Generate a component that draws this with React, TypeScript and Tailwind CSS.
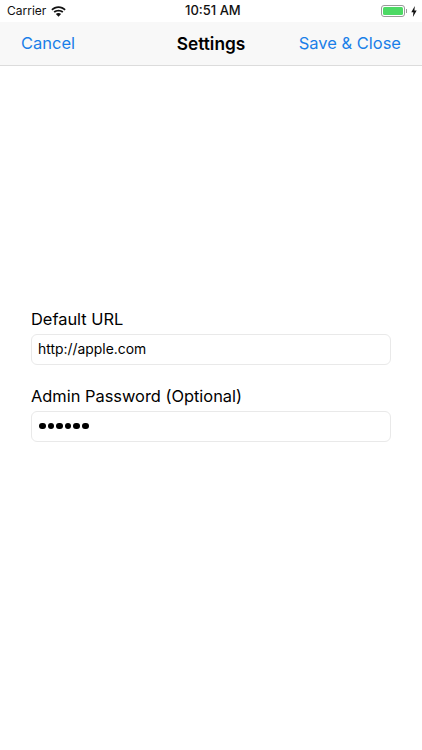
// App.tsx
const font = { fontFamily: "Inter, 'Liberation Sans', sans-serif" };

function Wifi() {
  return (
    <svg width="15" height="11" viewBox="0 0 15 11" fill="#111">
      <path d="M7.5 0.3C4.7 0.3 2.2 1.4 0.3 3.2L1.5 4.4C3.1 2.9 5.2 2 7.5 2s4.4 0.9 6 2.4l1.2-1.2C12.8 1.4 10.3 0.3 7.5 0.3z" />
      <path d="M7.5 3.7C5.6 3.7 3.9 4.4 2.6 5.6L3.8 6.8C4.8 5.9 6.1 5.4 7.5 5.4s2.7 0.5 3.7 1.4l1.2-1.2C11.1 4.4 9.4 3.7 7.5 3.7z" />
      <path d="M7.5 7C6.5 7 5.6 7.4 4.9 8L7.5 10.7 10.1 8C9.4 7.4 8.5 7 7.5 7z" />
    </svg>
  );
}

function Battery() {
  return (
    <div className="flex items-center gap-[2px]">
      <div className="flex items-center">
        <div className="w-[24px] h-[12px] rounded-[3px] border border-[#9a9a9a] p-[1px]">
          <div className="w-full h-full rounded-[1.5px] bg-[#4cd964]" />
        </div>
        <div className="w-[1px] h-[4px] bg-[#9a9a9a] ml-[1px]" />
      </div>
      <svg width="6" height="11" viewBox="0 0 6 11" fill="#111" className="ml-[2px]">
        <path d="M3.8 0 0.3 6.2h2.1L1.9 11 5.7 4.4H3.4z" />
      </svg>
    </div>
  );
}

function Field({ label, value, dots }: { label: string; value: string; dots?: boolean }) {
  return (
    <div className="flex flex-col">
      <label className="text-[16.4px] leading-[21px] text-black mb-[4px]">{label}</label>
      <div className="h-[31px] rounded-[6px] border border-[#e9e9e9] bg-white px-[6px] flex items-center text-[13.9px] text-black">
        {dots ? (
          <div className="flex gap-[2px] ml-[1px] mb-[1px]">
            {value.split("").map((_, i) => (
              <span key={i} className="w-[6.6px] h-[6.6px] rounded-full bg-black" />
            ))}
          </div>
        ) : (
          value
        )}
      </div>
    </div>
  );
}

export default function App() {
  return (
    <div className="w-[422px] h-[750px] bg-white flex flex-col overflow-hidden" style={font}>
      <div className="h-[22px] flex items-center justify-between pl-[7px] pr-[5px] relative text-[12px] text-[#111]">
        <div className="flex items-center gap-[5px]">
          <span>Carrier</span>
          <Wifi />
        </div>
        <span className="absolute left-[185px] text-[13px] font-medium">10:51 AM</span>
        <Battery />
      </div>
      <div className="h-[44px] bg-[#f8f8f8] border-b border-[#dcdcdc] grid grid-cols-[1fr_auto_1fr] items-center px-[21px] text-[16.5px]">
        <span className="text-[#1a7fe8]">Cancel</span>
        <span className="font-semibold text-black text-[17.3px]">Settings</span>
        <span className="text-[#1a7fe8] text-right">Save &amp; Close</span>
      </div>
      <div className="flex flex-col gap-[21px] px-[31px] pt-[243px]">
        <Field label="Default URL" value="http://apple.com" />
        <Field label="Admin Password (Optional)" value="123456" dots />
      </div>
    </div>
  );
}
